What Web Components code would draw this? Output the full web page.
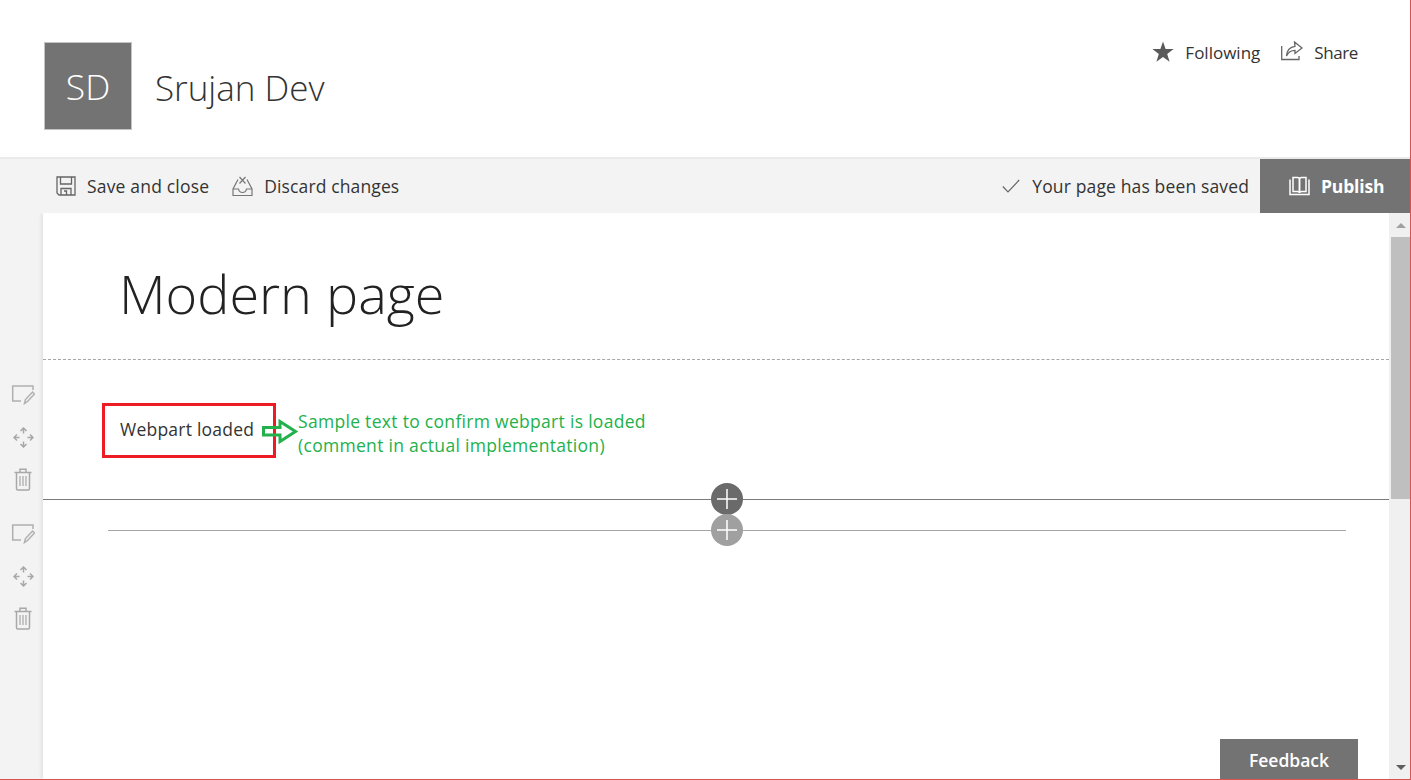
<!DOCTYPE html>
<html lang="en">
  <head>
    <meta charset="UTF-8" />
    <title>Modern page</title>
    <style>
      html, body {
        margin: 0;
        height: 100%;
      }
      body {
        width: 1411px;
        height: 780px;
        box-sizing: border-box;
        overflow: hidden;
        border-right: 1px solid #d9534f;
        border-bottom: 1px solid #d9534f;
        background: #fff;
        color: #333;
        font-family: "Open Sans", "Noto Sans", sans-serif;
        display: flex;
        flex-direction: column;
      }
    </style>
  </head>
  <body>
    <site-header initials="SD" name="Srujan Dev">
      <ui-action style="font-size: 17px; letter-spacing: 0">
        <svg slot="icon" width="22" height="22" viewBox="0 0 22 22"><path fill="#5a5a5a" d="M11 0.500l2.600 7.600h8l-6.400 4.800 2.400 7.800L11 16l-6.600 4.700 2.400-7.800L.4 8.100h8z"/></svg>
        Following
      </ui-action>
      <ui-action style="font-size: 17px; letter-spacing: -.4px">
        <svg slot="icon" width="22" height="22" viewBox="0 0 22 22" fill="none" stroke="#666" stroke-width="1.300"><path d="M.7 5v13.500H18V15"/><path d="M13.500 1l7.500 6-7 5.500V9.300c-3.600 0-6.600 1.500-8.500 5.700.3-5.500 3.400-9 8.500-9.700z"/></svg>
        Share
      </ui-action>
    </site-header>

    <edit-toolbar>
      <ui-action slot="left">
        <svg slot="icon" width="20" height="20" viewBox="0 0 20 20" fill="none" stroke="#666" stroke-width="1.300"><path d="M1 1h18v18H3l-2-2z"/><path d="M4.500 1v7h11V1"/><path d="M5 19v-6.500h10V19"/><path d="M8 15h2.500v4"/></svg>
        Save and close
      </ui-action>
      <ui-action slot="left" style="letter-spacing: .13px">
        <svg slot="icon" width="21" height="20" viewBox="0 0 21 20" fill="none" stroke="#777" stroke-width="1.200"><path d="M6 3.500L1 13v6.500h19V13L15 3.500"/><path d="M1 13h5.500c.5 2.500 2 3.500 4 3.500s3.500-1 4-3.500H20"/><path d="M7.500 1l6 6.500M13.500 1l-6 6.500"/></svg>
        Discard changes
      </ui-action>
      <ui-action slot="right" style="--gap: 12px; letter-spacing: .14px">
        <svg slot="icon" width="18" height="14" viewBox="0 0 18 14" fill="none" stroke="#666" stroke-width="1.200"><path d="M.8 7.500l5.200 5.300L17.200 1"/></svg>
        Your page has been saved
      </ui-action>
      <publish-button slot="right">
        <svg slot="icon" width="21" height="20" viewBox="0 0 21 20" fill="none" stroke="#fff" stroke-width="1.500"><path d="M4 1.500h4.500c1.200 0 2 .8 2 2v13.500c0-1-.8-1.500-2-1.500H4z"/><path d="M17 1.500h-4.500c-1.200 0-2 .8-2 2v13.500c0-1 .8-1.500 2-1.500H17z"/><path d="M1 3.500v15h19v-15"/></svg>
        Publish
      </publish-button>
    </edit-toolbar>

    <page-main>
      <section-rail slot="rail"></section-rail>
      <section-rail slot="rail"></section-rail>

      <page-title>Modern page</page-title>

      <page-section>
        <webpart-box>Webpart loaded</webpart-box>
        <webpart-note>Sample text to confirm webpart is loaded<br />(comment in actual implementation)</webpart-note>
        <add-button class="dark"></add-button>
      </page-section>

      <empty-section>
        <add-button class="light"></add-button>
      </empty-section>

      <feedback-button>Feedback</feedback-button>
    </page-main>

    <script>
      // helper, every element just sets its own shadow root
      function shadow(el, html) {
        el.attachShadow({ mode: "open" }).innerHTML = html
      }

      class SiteHeader extends HTMLElement {
        constructor() {
          super()
          shadow(this, `
            <style>
              :host { display: flex; flex: none; height: 157px; border-bottom: 2px solid #eaeaea; background: #fff; justify-content: space-between; }
              .site { display: flex; align-items: center; padding: 42px 0 0 44px; height: 88px; }
              .logo { width: 86px; height: 86px; border: 1px solid #c4c4c4; background: #737373; color: #fff; font-size: 35.500px; font-weight: 300; display: flex; align-items: center; justify-content: center; }
              .name { margin-left: 23px; padding-top: 2px; font-size: 35px; font-weight: 300; color: #333; }
              .actions { display: flex; gap: 21px; padding: 41px 52px 0 0; height: 22px; --gap: 11px; --label-pad: 0; --label-top: 1px; }
            </style>
            <div class="site">
              <div class="logo">${this.getAttribute("initials")}</div>
              <div class="name">${this.getAttribute("name")}</div>
            </div>
            <div class="actions"><slot></slot></div>
          `)
        }
      }

      class UiAction extends HTMLElement {
        constructor() {
          super()
          shadow(this, `
            <style>
              :host { display: inline-flex; align-items: center; gap: var(--gap, 11px); font-size: 17.500px; letter-spacing: .18px; color: #333; white-space: nowrap; }
              ::slotted(svg) { flex: none; }
              .label { padding-bottom: var(--label-pad, 1px); padding-top: var(--label-top, 0); }
            </style>
            <slot name="icon"></slot><span class="label"><slot></slot></span>
          `)
        }
      }

      class EditToolbar extends HTMLElement {
        constructor() {
          super()
          shadow(this, `
            <style>
              :host { display: flex; flex: none; height: 54px; background: #f3f3f3; justify-content: space-between; }
              .left { display: flex; align-items: center; gap: 23px; padding-left: 56px; }
              .right { display: flex; align-items: center; gap: 11px; }
            </style>
            <div class="left"><slot name="left"></slot></div>
            <div class="right"><slot name="right"></slot></div>
          `)
        }
      }

      class PublishButton extends HTMLElement {
        constructor() {
          super()
          shadow(this, `
            <style>
              :host { display: flex; align-items: center; gap: 11px; width: 150px; height: 54px; box-sizing: border-box; padding-left: 29px; background: #737373; color: #fff; font-size: 17.500px; font-weight: 700; letter-spacing: -.15px; }
            </style>
            <slot name="icon"></slot><slot></slot>
          `)
        }
      }

      class PageMain extends HTMLElement {
        constructor() {
          super()
          shadow(this, `
            <style>
              :host { display: flex; flex: 1; min-height: 0; position: relative; overflow: hidden; }
              .rail { width: 43px; flex: none; background: #f3f3f3; display: flex; flex-direction: column; gap: 13px; padding-top: 161px; box-sizing: border-box; }
              .canvas { flex: 1; min-width: 0; background: #fff; box-shadow: -1px 0 4px rgba(0,0,0,.1); display: flex; flex-direction: column; position: relative; }
              .scroll { width: 21px; flex: none; background: #f0f0f0; display: flex; flex-direction: column; align-items: flex-end; position: relative; }
              .up { width: 19px; height: 24px; display: flex; align-items: center; justify-content: center; }
              .thumb { width: 19px; height: 262px; background: #bfbfbf; }
              .down { width: 19px; height: 24px; margin-top: auto; display: flex; align-items: center; justify-content: center; }
              .tri { width: 0; height: 0; border-left: 5px solid transparent; border-right: 5px solid transparent; }
              .up .tri { border-bottom: 5px solid #a0a0a0; }
              .down .tri { border-top: 5px solid #5f5f5f; }
            </style>
            <div class="rail"><slot name="rail"></slot></div>
            <div class="canvas"><slot></slot></div>
            <div class="scroll">
              <div class="up"><div class="tri"></div></div>
              <div class="thumb"></div>
              <div class="down"><div class="tri"></div></div>
            </div>
          `)
        }
      }

      class SectionRail extends HTMLElement {
        constructor() {
          super()
          shadow(this, `
            <style>
              :host { display: flex; flex-direction: column; align-items: flex-start; }
              .btn { height: 42px; width: 46px; display: flex; align-items: center; justify-content: center; }
            </style>
            <div class="btn">
              <svg width="24" height="20" viewBox="0 0 24 20" fill="none" stroke="#b0b0b0" stroke-width="1.500"><path d="M22 5V1H1.700v15H10"/><path d="M13.500 18.500l1-4 7-7.500 2 2-7 7.500z"/></svg>
            </div>
            <div class="btn">
              <svg width="21" height="21" viewBox="0 0 21 21" fill="none" stroke="#a8a8a8" stroke-width="1.500"><path d="M10.500 1v5.500M7.500 4l3-3 3 3M10.500 20v-5.500M7.500 17l3 3 3-3M1 10.500h5.500M4 7.500l-3 3 3 3M20 10.500h-5.500M17 7.500l3 3-3 3"/></svg>
            </div>
            <div class="btn">
              <svg width="18" height="23" viewBox="0 0 18 23" fill="none" stroke="#a8a8a8" stroke-width="1.500"><path d="M.5 4.500h17M6 4.500V1.200h6v3.300M2.500 4.500v16c0 .8.500 1.500 1.300 1.500h10.400c.8 0 1.300-.7 1.300-1.500v-16"/><path d="M6 8v10M9 8v10M12 8v10" stroke-width="1.200"/></svg>
            </div>
          `)
        }
      }

      class PageTitle extends HTMLElement {
        constructor() {
          super()
          shadow(this, `
            <style>
              :host { display: block; flex: none; height: 147px; box-sizing: border-box; padding: 41px 0 0 76px; font-size: 54px; line-height: 78px; font-weight: 300; color: #222; border-bottom: 1px dashed #a6a6a6; }
            </style>
            <slot></slot>
          `)
        }
      }

      class PageSection extends HTMLElement {
        constructor() {
          super()
          shadow(this, `
            <style>
              :host { display: flex; flex: none; height: 140px; box-sizing: border-box; padding: 43px 0 0 59px; border-bottom: 1px solid #7a7a7a; position: relative; }
            </style>
            <slot></slot>
          `)
        }
      }

      class WebpartBox extends HTMLElement {
        constructor() {
          super()
          shadow(this, `
            <style>
              :host { display: flex; align-items: center; width: 174px; height: 55px; box-sizing: border-box; padding: 0 0 3px 15px; border: 3px solid #ed1c24; font-size: 17.500px; letter-spacing: .23px; color: #333; white-space: nowrap; }
            </style>
            <slot></slot>
          `)
        }
      }

      // the arrow and the note sit over the page, they were added on the screenshot
      class WebpartNote extends HTMLElement {
        constructor() {
          super()
          shadow(this, `
            <style>
              :host { position: absolute; left: 219px; top: 49px; display: block; }
              svg { position: absolute; left: 0; top: 1px; }
              .txt { position: absolute; left: 36px; top: 0; width: 400px; color: #22b14c; font-size: 17.500px; line-height: 24px; letter-spacing: .3px; white-space: nowrap; }
            </style>
            <svg width="38" height="36" viewBox="0 0 38 36" fill="none" stroke="#22b14c" stroke-width="3"><path d="M1.500 17.500H18V11.500L33.500 21.500 18 31.500V25H1.500z"/></svg>
            <div class="txt"><slot></slot></div>
          `)
        }
      }

      class AddButton extends HTMLElement {
        constructor() {
          super()
          shadow(this, `
            <style>
              :host { position: absolute; left: 668px; width: 32px; height: 32px; border-radius: 50%; display: flex; align-items: center; justify-content: center; }
              :host(.dark) { bottom: -16px; background: #6a6a6a; }
              :host(.light) { top: 14px; background: #a0a0a0; }
            </style>
            <svg width="20" height="20" viewBox="0 0 20 20" stroke="#fff" stroke-width="1.500"><path d="M10 0v20M0 10h20"/></svg>
          `)
        }
      }

      class EmptySection extends HTMLElement {
        constructor() {
          super()
          shadow(this, `
            <style>
              :host { display: block; position: relative; height: 100px; }
              .line { position: absolute; left: 65px; width: 1238px; top: 30px; height: 1px; background: #a6a6a6; }
            </style>
            <div class="line"></div>
            <slot></slot>
          `)
        }
      }

      class FeedbackButton extends HTMLElement {
        constructor() {
          super()
          shadow(this, `
            <style>
              :host { position: absolute; left: 1177px; bottom: 0; width: 138px; height: 40px; box-sizing: border-box; padding-top: 1px; background: #737373; color: #fff; font-size: 17.500px; font-weight: 600; display: flex; align-items: center; justify-content: center; }
            </style>
            <slot></slot>
          `)
        }
      }

      customElements.define("site-header", SiteHeader)
      customElements.define("ui-action", UiAction)
      customElements.define("edit-toolbar", EditToolbar)
      customElements.define("publish-button", PublishButton)
      customElements.define("page-main", PageMain)
      customElements.define("section-rail", SectionRail)
      customElements.define("page-title", PageTitle)
      customElements.define("page-section", PageSection)
      customElements.define("webpart-box", WebpartBox)
      customElements.define("webpart-note", WebpartNote)
      customElements.define("add-button", AddButton)
      customElements.define("empty-section", EmptySection)
      customElements.define("feedback-button", FeedbackButton)
    </script>
  </body>
</html>
